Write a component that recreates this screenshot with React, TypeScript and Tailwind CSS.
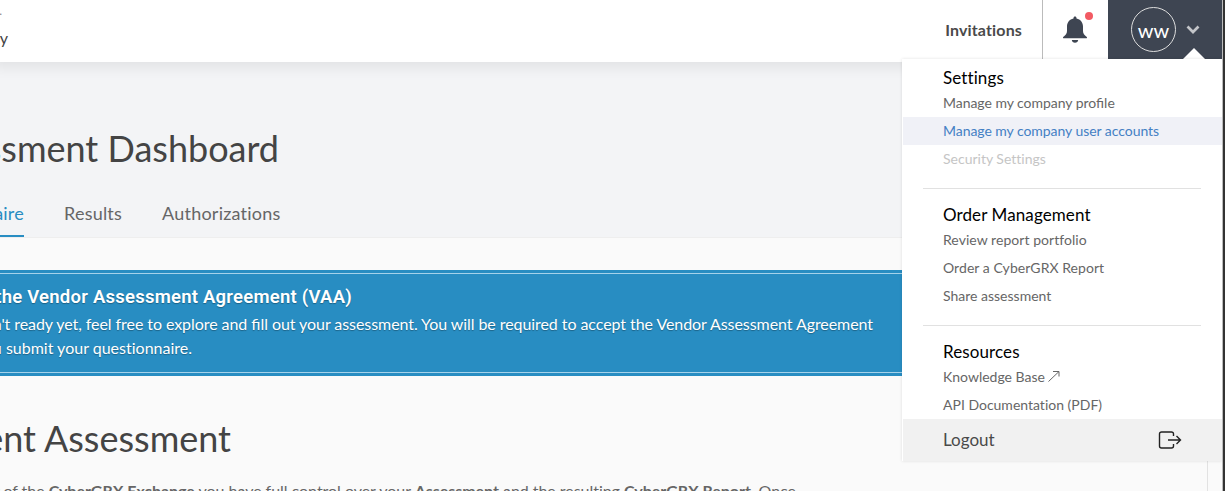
import type { ReactNode } from "react";

function MenuItem({ children, className = "text-[#666]" }: { children: ReactNode; className?: string }) {
  return <a className={`flex h-7 items-center pb-[2px] text-[14px] ${className}`}><span className="flex items-center pl-[41px]">{children}</span></a>;
}

function MenuHeading({ children }: { children: ReactNode }) {
  return <h3 className="flex h-7 items-center pl-[41px] text-[17px] tracking-[0.1px] text-black">{children}</h3>;
}

function Bell() {
  return (
    <svg viewBox="0 0 24 28" className="mr-[2px] h-7 w-6" fill="#3e4552">
      <path d="M12 .6c.9 0 1.500.6 1.500 1.500v.5c4 .8 6.500 4 6.500 7.900v4.500c0 2.600 1.400 4.200 3.500 5.700.9.700.500 1.500-.3 1.500H.8c-.8 0-1.200-.8-.3-1.500C2.600 19.200 4 17.600 4 15v-4.500c0-3.900 2.500-7.100 6.500-7.900v-.5C10.500 1.200 11.100.6 12 .6z" />
      <path d="M8.800 24.100h6.400c-.3 1.700-1.400 2.700-3.200 2.700s-2.900-1-3.200-2.700z" />
    </svg>
  );
}

function UserMenu() {
  return (
    <nav className="absolute top-[59px] right-[3px] flex w-80 flex-col bg-white pt-[5px] shadow-[0_0_3px_rgba(0,0,0,0.12)]">
      <MenuHeading>Settings</MenuHeading>
      <div className="-mt-[3px]">
        <MenuItem className="tracking-[-0.04px] text-[#666]">
          <span className="whitespace-pre">Manage my company </span>
          <span className="tracking-normal [font-variant-ligatures:normal]">profile</span>
        </MenuItem>
        <MenuItem className="-mr-px bg-[#f0f1f7] tracking-[-0.05px] text-[#4480c4] shadow-[inset_1px_0_#fff]">Manage my company user accounts</MenuItem>
        <MenuItem className="text-[#c5c5c5]">Security Settings</MenuItem>
      </div>
      <hr className="mx-[21px] mt-[15px] mb-[12px] border-[#e1e1e1]" />
      <MenuHeading>Order Management</MenuHeading>
      <div className="-mt-[3px]">
        <MenuItem className="tracking-[0.05px] text-[#666]">Review report portfolio</MenuItem>
        <MenuItem className="tracking-[0.05px] text-[#666]">Order a CyberGRX Report</MenuItem>
        <MenuItem>Share assessment</MenuItem>
      </div>
      <hr className="mx-[21px] mt-[15px] mb-[12px] border-[#e1e1e1]" />
      <MenuHeading>Resources</MenuHeading>
      <div className="-mt-[3px]">
        <MenuItem>
          Knowledge Base
          <svg viewBox="0 0 12 12" className="ml-[3px] size-3" fill="none" stroke="#666" strokeWidth="1">
            <path d="M.5 11.500 11 1.500M5 1.500h6v5" />
          </svg>
        </MenuItem>
        <MenuItem>API Documentation (PDF)</MenuItem>
      </div>
      <a className="ml-px flex h-[42px] items-center justify-between bg-[#f1f1f1] pr-10 pl-10 text-[17px] text-[#4a4a4a]">
        Logout
        <svg viewBox="0 0 24 18" className="h-[18px] w-6" fill="none" stroke="#222" strokeWidth="1.400">
          <path d="M15.500 5V3a2 2 0 0 0-2-2H3.500a2 2 0 0 0-2 2v12a2 2 0 0 0 2 2h10a2 2 0 0 0 2-2v-2" />
          <path d="M10 9h12.500M18.500 5l4 4-4 4" />
        </svg>
      </a>
    </nav>
  );
}

export default function App() {
  return (
    <div className="relative flex h-[491px] w-[1225px] overflow-hidden bg-[#fafafa] font-[Lato,sans-serif] text-[#444] [font-variant-ligatures:none]">
      <div className="flex min-w-0 flex-1 flex-col">
        <header className="relative z-10 flex h-[62px] shrink-0 bg-white shadow-[0_0_12px_6px_rgba(0,0,0,0.07)]">
          <div className="flex w-2 flex-col items-end pt-[3px] whitespace-nowrap">
            <span className="mr-[6px] text-[12px] leading-4 text-[#888]">Company Inc.</span>
            <span className="mt-[9px] text-[16px] leading-5">My Company</span>
          </div>
          <div className="ml-auto flex h-[59px]">
            <a className="flex items-center pr-5 text-[16px] font-bold tracking-[0.15px] text-[#4a4a4a]">Invitations</a>
            <div className="relative flex w-[66px] items-center justify-center border-l border-[#bbb]">
              <Bell />
              <span className="absolute top-3 right-[15px] size-2 rounded-full bg-[#f25a63]" />
            </div>
            <div className="relative flex w-[114px] items-center bg-[#3e4552] pl-[23px]">
              <span className="flex size-[45px] items-center justify-center rounded-full border border-[#ddd] text-[20px] text-white">ww</span>
              <svg viewBox="0 0 14 9" className="ml-[10px] h-[9px] w-[14px]" fill="none" stroke="#c3c5c9" strokeWidth="2.700">
                <path d="M1.500 1.500 7 7l5.500-5.500" />
              </svg>
              <svg viewBox="0 0 22 11" className="absolute right-[17px] bottom-0 h-[11px] w-[22px]" fill="#fff">
                <path d="M0 11 11 0l11 11z" />
              </svg>
            </div>
          </div>
        </header>

        <section className="flex h-44 shrink-0 flex-col border-b border-[#eee] bg-[#f3f4f6]">
          <h1 className="mt-[62px] flex w-[279px] justify-end text-[36px] leading-[48px] whitespace-nowrap">Assessment Dashboard</h1>
          <div className="mt-auto flex h-12 items-stretch gap-10 text-[18px] tracking-[0.22px] text-[#666]">
            <a className="flex w-6 items-center justify-end border-b-2 border-[#288dc2] pt-[2px] text-[#288dc2]">Questionnaire</a>
            <a className="flex items-center">Results</a>
            <a className="flex items-center">Authorizations</a>
          </div>
        </section>

        <main className="flex flex-col pt-8">
          <section className="h-[106px] bg-[#288dc2] py-[3px] text-white [text-shadow:0_1px_1px_rgba(0,0,0,0.3)]">
            <div className="flex h-[100px] flex-col border-y border-[#a5d2ea] pt-[11px] whitespace-nowrap">
              <h2 className="flex w-[352px] justify-end font-[Roboto,sans-serif] text-[18.5px] leading-6 font-semibold tracking-[0.23px]">Accept the Vendor Assessment Agreement (VAA)</h2>
              <p className="mt-[3px] flex w-[873px] justify-end text-[16px] leading-6 tracking-[-0.07px]">
                <span>
                  If you aren't ready yet, feel free to explore and <span className="[font-variant-ligatures:common-ligatures] tracking-normal">fill</span> out your assessment. You will be required to accept the Vendor Assessment Agreement
                </span>
              </p>
              <p className="flex w-48 justify-end text-[16px] leading-6">before you submit your questionnaire.</p>
            </div>
          </section>
          <h2 className="mt-[38px] flex w-[231px] justify-end text-[36px] leading-[48px] whitespace-nowrap">Current Assessment</h2>
          <div className="mt-[17px] flex w-[796px] justify-end whitespace-nowrap text-[#666]">
            <p className="text-[16px] leading-6 tracking-[-0.035px]">As a member of the <b>CyberGRX Exchange</b> you have full control over your <b>Assessment</b> and the resulting <b>CyberGRX Report</b>. Once</p>
          </div>
        </main>
      </div>
      <div className="absolute top-[461px] right-[17px] h-[30px] w-px bg-[#e2e2e2]" />
      <div className="z-20 w-[3px] border-l border-[#bbb] bg-[#333]" />
      <div className="absolute inset-0 z-10"><UserMenu /></div>
    </div>
  );
}
